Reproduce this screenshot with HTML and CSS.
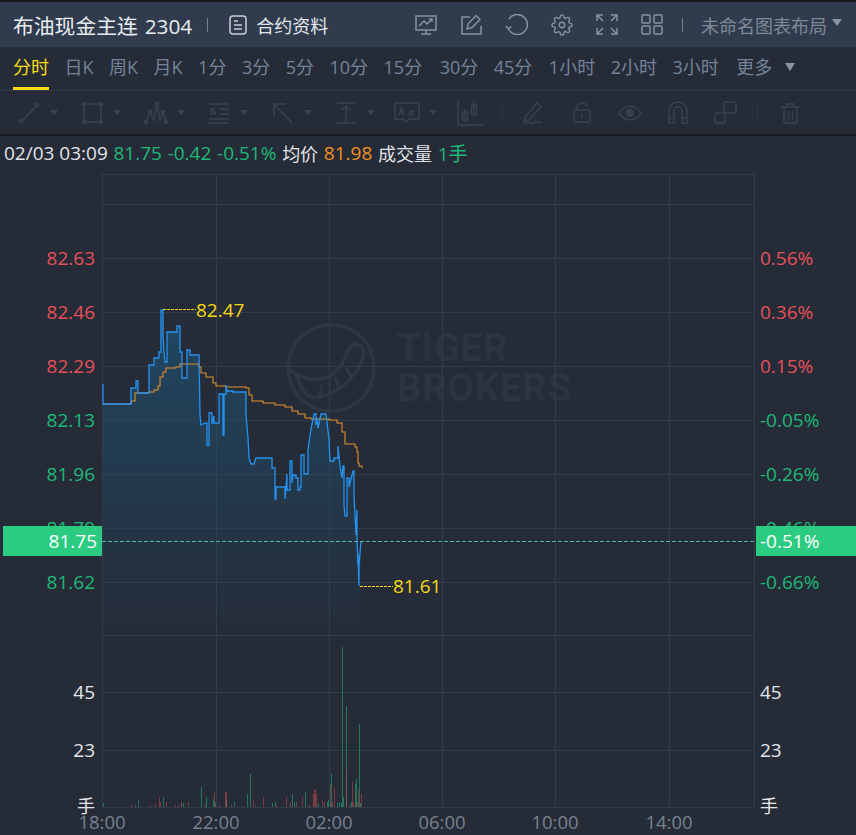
FILE: index.html
```html
<!DOCTYPE html>
<html lang="zh-CN">
<head>
  <meta charset="UTF-8">
  <title>布油现金主连 2304</title>
  <link rel="stylesheet" href="styles.css">
</head>
<body>
  <div class="header">
    <span class="title">布油现金主连 2304</span>
    <span class="divider title-divider"></span>
    <svg class="doc-icon" width="18" height="20" viewBox="0 0 18 20">
      <rect x="1" y="1" width="16" height="18" rx="3"/>
      <path d="M5 6h4M5 10h8M5 14h8"/>
    </svg>
    <span class="contract">合约资料</span>
    <div class="header-right">
      <svg width="22" height="20" viewBox="0 0 22 20">
        <rect x="1" y="1" width="20" height="14"/>
        <path d="M4 11l5-5 3 3 5-5M14 4h3v3M11 15v4M6 19h10"/>
      </svg>
      <svg width="22" height="21" viewBox="0 0 22 21">
        <path d="M10 3H2v17h19v-8M7 15l1-5 8-8.500 4 4-8 8z"/>
      </svg>
      <svg width="23" height="21" viewBox="0 0 23 21">
        <path d="M4 5a10 10 0 1 1-1 9M1 12l2.500 3 3-2.500"/>
      </svg>
      <svg width="22" height="22" viewBox="0 0 24 24">
        <circle cx="12" cy="12" r="3"/>
        <path d="M19.400 15a1.650 1.650 0 0 0 .33 1.820l.06.06a2 2 0 0 1 0 2.830 2 2 0 0 1-2.830 0l-.06-.06a1.650 1.650 0 0 0-1.820-.33 1.650 1.650 0 0 0-1 1.510V21a2 2 0 0 1-2 2 2 2 0 0 1-2-2v-.09A1.650 1.650 0 0 0 9 19.400a1.650 1.650 0 0 0-1.820.33l-.06.06a2 2 0 0 1-2.830 0 2 2 0 0 1 0-2.830l.06-.06a1.650 1.650 0 0 0 .33-1.820 1.650 1.650 0 0 0-1.510-1H3a2 2 0 0 1-2-2 2 2 0 0 1 2-2h.09A1.650 1.650 0 0 0 4.600 9a1.650 1.650 0 0 0-.33-1.820l-.06-.06a2 2 0 0 1 0-2.830 2 2 0 0 1 2.830 0l.06.06a1.650 1.650 0 0 0 1.820.33H9a1.650 1.650 0 0 0 1-1.510V3a2 2 0 0 1 2-2 2 2 0 0 1 2 2v.09a1.650 1.650 0 0 0 1 1.510 1.650 1.650 0 0 0 1.820-.33l.06-.06a2 2 0 0 1 2.830 0 2 2 0 0 1 0 2.830l-.06.06a1.650 1.650 0 0 0-.33 1.820V9a1.650 1.650 0 0 0 1.510 1H21a2 2 0 0 1 2 2 2 2 0 0 1-2 2h-.09a1.650 1.650 0 0 0-1.510 1z"/>
      </svg>
      <svg width="22" height="21" viewBox="0 0 22 21">
        <path d="M7 1H1v6M1 1l6 6M15 1h6v6M21 1l-6 6M1 14v6h6M1 20l6-6M21 14v6h-6M21 20l-6-6"/>
      </svg>
      <svg width="22" height="21" viewBox="0 0 22 21">
        <rect x="1" y="1" width="8" height="8" rx="1"/>
        <rect x="13" y="1" width="8" height="8" rx="1"/>
        <rect x="1" y="12" width="8" height="8" rx="1"/>
        <rect x="13" y="12" width="8" height="8" rx="1"/>
      </svg>
      <span class="divider layout-divider"></span>
      <span class="layout-name">未命名图表布局</span>
      <span class="caret caret-layout"></span>
    </div>
  </div>

  <div class="periods">
    <span class="period active">分时</span>
    <span class="period">日K</span>
    <span class="period">周K</span>
    <span class="period">月K</span>
    <span class="period">1分</span>
    <span class="period">3分</span>
    <span class="period">5分</span>
    <span class="period">10分</span>
    <span class="period">15分</span>
    <span class="period shift-2">30分</span>
    <span class="period">45分</span>
    <span class="period shift-1">1小时</span>
    <span class="period">2小时</span>
    <span class="period">3小时</span>
    <span class="period more">更多</span>
    <span class="caret caret-more"></span>
  </div>

  <div class="tools">
    <div class="tool">
      <svg width="24" height="24" viewBox="0 0 24 24"><path d="M5 20L19 5"/><circle cx="4" cy="20" r="1.500"/><circle cx="20" cy="4" r="1.500"/></svg>
      <span class="caret caret-tool"></span>
    </div>
    <div class="tool">
      <svg width="24" height="24" viewBox="0 0 24 24"><rect x="4" y="3" width="17" height="18"/><circle cx="4" cy="3" r="1.500"/><circle cx="21" cy="3" r="1.500"/><circle cx="4" cy="21" r="1.500"/><circle cx="21" cy="21" r="1.500"/></svg>
      <span class="caret caret-tool"></span>
    </div>
    <div class="tool">
      <svg width="24" height="24" viewBox="0 0 24 24"><path d="M2 21L6 11l4 8 3-16 3 16 3-8 3 10"/><circle cx="2" cy="21" r="1.500"/><circle cx="6" cy="11" r="1.500"/><circle cx="13" cy="3" r="1.500"/><circle cx="19" cy="11" r="1.500"/><circle cx="22" cy="21" r="1.500"/></svg>
      <span class="caret caret-tool"></span>
    </div>
    <div class="tool">
      <svg width="24" height="24" viewBox="0 0 24 24"><path d="M2 3h20M12 8h10M12 13h10M2 18h20M2 22h20"/><path d="M8 8H4v5h4v-2H6"/></svg>
      <span class="caret caret-tool"></span>
    </div>
    <div class="tool">
      <svg width="24" height="24" viewBox="0 0 24 24"><path d="M3 15V3h12M3 3l18 19"/></svg>
      <span class="caret caret-tool"></span>
    </div>
    <div class="tool tool-narrow">
      <svg width="24" height="24" viewBox="0 0 24 24"><path d="M3 2h19M3 22h19M12 6v16M8 9l4-4 4 4"/></svg>
      <span class="caret caret-tool"></span>
    </div>
    <div class="tool tool-text">
      <svg width="26" height="24" viewBox="0 0 26 24"><path d="M1 2h24v16H15l-3 3-3-3H1z"/><path d="M5 14l2.500-7L10 14M6 12h3M19 9v5M19 11a2 2 0 1 0 0 2"/></svg>
      <span class="caret caret-tool"></span>
    </div>
    <svg class="tool-candles" width="26" height="26" viewBox="0 0 26 26"><path d="M1 1v24h25M8 9v13M17 2v15"/><rect x="5.500" y="12" width="5" height="8"/><rect x="14.500" y="5" width="5" height="9"/></svg>
    <span class="tool-divider divider-a"></span>
    <svg class="tool-pen" width="22" height="24" viewBox="0 0 22 24"><path d="M3 16L15 2l4 4L7 19l-5 1zM1 23c5-4 8 1 11-1s5-1 8 0"/></svg>
    <svg class="tool-lock" width="18" height="21" viewBox="0 0 18 21"><rect x="1" y="8" width="16" height="12" rx="2"/><path d="M4 8V5a5 4 0 0 1 10 0M9 12v4"/></svg>
    <svg class="tool-eye" width="24" height="16" viewBox="0 0 24 16"><path d="M1 8c6-9 16-9 22 0-6 9-16 9-22 0z"/><circle class="solid" cx="12" cy="8" r="4"/></svg>
    <svg class="tool-magnet" width="20" height="23" viewBox="0 0 20 23"><path d="M1 22V10a9 9 0 0 1 18 0v12h-5V10a4 4 0 0 0-8 0v12zM1 17h5M14 17h5"/></svg>
    <svg class="tool-copy" width="23" height="23" viewBox="0 0 23 23"><rect x="1" y="12" width="10" height="10" rx="2"/><rect x="10" y="1" width="12" height="11" rx="2"/></svg>
    <span class="tool-divider divider-b"></span>
    <svg class="tool-trash" width="21" height="22" viewBox="0 0 21 22"><path d="M1 5h19M7 5V2h7v3M4 5v15a1 1 0 0 0 1 1h11a1 1 0 0 0 1-1V5M8.500 9v8M12.500 9v8"/></svg>
  </div>

  <div class="quote">
    <span class="num">02/03 03:09</span>
    <span class="num green">81.75</span>
    <span class="num green">-0.42</span>
    <span class="num green">-0.51%</span>
    <span>均价</span>
    <span class="num orange">81.98</span>
    <span>成交量</span>
    <span class="num green">1手</span>
  </div>

  <svg class="chart" width="856" height="665" viewBox="0 170 856 665">
    <defs>
      <linearGradient id="areaFill" x1="0" y1="310" x2="0" y2="636" gradientUnits="userSpaceOnUse">
        <stop offset="0" stop-color="#1f5170" stop-opacity="0.75"/>
        <stop offset="1" stop-color="#1f5170" stop-opacity="0.02"/>
      </linearGradient>
    </defs>

    <!-- watermark -->
    <g class="mark-logo">
      <circle cx="331" cy="368" r="43"/>
      <path d="M288 369c20 15 42 14 54-5l6-13c2-5 7-8 11-6 5 2 6 8 4 13-8 22-28 38-50 40-9-3-14-13-17-25M322 385l-3 14M335 377l5 13M346 368l6 10"/>
    </g>
    <text class="mark-text" x="397" y="348">TIGER</text>
    <text class="mark-text" x="397" y="388">BROKERS</text>

    <!-- grid -->
    <path class="grid" d="M102 174.500H754M102 204.500H754M102 258.500H754M102 312.500H754M102 366.500H754M102 420.500H754M102 474.500H754M102 528.500H754M102 582.500H754M102 635.500H754M102 692.500H754M102 750.500H754M102 807.500H754"/>
    <path class="grid" d="M102.500 174V808M216.500 174V808M329.500 174V808M442.500 174V808M555.500 174V808M669.500 174V808M754.500 174V808"/>

    <!-- price -->
    <path class="price-area" d="M103 384V404H131V388H136V381H138V393H149V365H154V358H159V352H161V310H163V333L164 352 165 362H167V332H177V326H180V352H182V378H187V350H190V355H199L200 415 201 425 205 423H207V445H209V413H212V424L214 416V423H219V394H223V435H224V394H226V385L227 391H233V392H246V415L248 438 249 458 251 464H254L256 458H272V468H275V499H276V487H285V499L287 474V490H290V461H292V483L293 475H296V478H298V490H300V487H301V455H304V474H308V449L311 429 314 414H316V425L317 418 318 428 321 414H326L329 439 330 461H334V458H338V446L340 466 342 478 343 466H344V505L345 516H347V478H349V487L353 471H354V495L356 535 357 510V540L358 566V554L359 586V565L361 541V636H103Z"/>

    <!-- average price -->
    <path class="avg-line" d="M103 404H131V401H135V393H149V392H154V390H158V386H160V377H163V372H166V368H176V367H180V364H199V367H201V373H206V377H213V383H216V386H226V387H246V388H249V395H252V401H263V403H275V405H285V407H292V411H298V414H305V418H311V419H329V420H337V423H342V432H345V444H355V447H357V452H358V463H359V466H362V468"/>

    <path class="price-line" d="M103 384V404H131V388H136V381H138V393H149V365H154V358H159V352H161V310H163V333L164 352 165 362H167V332H177V326H180V352H182V378H187V350H190V355H199L200 415 201 425 205 423H207V445H209V413H212V424L214 416V423H219V394H223V435H224V394H226V385L227 391H233V392H246V415L248 438 249 458 251 464H254L256 458H272V468H275V499H276V487H285V499L287 474V490H290V461H292V483L293 475H296V478H298V490H300V487H301V455H304V474H308V449L311 429 314 414H316V425L317 418 318 428 321 414H326L329 439 330 461H334V458H338V446L340 466 342 478 343 466H344V505L345 516H347V478H349V487L353 471H354V495L356 535 357 510V540L358 566V554L359 586V565L361 541"/>

    <!-- high and low -->
    <path class="extreme-dash" d="M163 309.500H196M360 586.500H393"/>
    <text class="extreme" x="196" y="310">82.47</text>
    <text class="extreme" x="393" y="586">81.61</text>

    <!-- volume -->
    <path class="vol-green" d="M103.500 807V803M138.500 807V800M163.500 807V797M181.500 807V803M183.500 807V803M201.500 807V787M206.500 807V797M213.500 807V799M215.500 807V802M226.500 807V799M234.500 807V802M247.500 807V794M250.500 807V774M272.500 807V803M275.500 807V802M292.500 807V794M294.500 807V802M305.500 807V792M318.500 807V803M327.500 807V802M328.500 807V800M331.500 807V774M337.500 807V803M339.500 807V802M341.500 807V803M342.500 807V647M346.500 807V706M343.500 807V797M351.500 807V802M355.500 807V784M356.500 807V779M359.500 807V724M360.500 807V803"/>
    <path class="vol-red" d="M131.500 807V805M135.500 807V805M150.500 807V805M155.500 807V804M159.500 807V797M160.500 807V802M166.500 807V802M175.500 807V805M178.500 807V805M181.500 807V802M188.500 807V802M205.500 807V805M214.500 807V792M219.500 807V805M225.500 807V792M226.500 807V792M231.500 807V805M253.500 807V799M255.500 807V805M263.500 807V797M276.500 807V805M286.500 807V797M290.500 807V802M296.500 807V802M302.500 807V797M309.500 807V805M313.500 807V794M314.500 807V790M315.500 807V789M316.500 807V794M322.500 807V799M324.500 807V802M330.500 807V784M332.500 807V802M334.500 807V787M346.500 807V769M349.500 807V805M352.500 807V782M353.500 807V802M357.500 807V802M358.500 807V789M361.500 807V794"/>

    <!-- left axis -->
    <g class="axis-left">
      <text class="up" x="95" y="258">82.63</text>
      <text class="up" x="95" y="312">82.46</text>
      <text class="up" x="95" y="366">82.29</text>
      <text class="down" x="95" y="420">82.13</text>
      <text class="down" x="95" y="474">81.96</text>
      <text class="down" x="95" y="528">81.79</text>
      <text class="down" x="95" y="582">81.62</text>
      <text class="plain" x="95" y="692">45</text>
      <text class="plain" x="95" y="750">23</text>
      <text class="plain hand" x="95" y="806">手</text>
    </g>

    <!-- right axis -->
    <g class="axis-right">
      <text class="up" x="760" y="258">0.56%</text>
      <text class="up" x="760" y="312">0.36%</text>
      <text class="up" x="760" y="366">0.15%</text>
      <text class="down" x="760" y="420">-0.05%</text>
      <text class="down" x="760" y="474">-0.26%</text>
      <text class="down" x="760" y="528">-0.46%</text>
      <text class="down" x="760" y="582">-0.66%</text>
      <text class="plain" x="760" y="692">45</text>
      <text class="plain" x="760" y="750">23</text>
      <text class="plain hand" x="760" y="806">手</text>
    </g>

    <!-- time axis -->
    <g class="axis-time">
      <text x="102" y="821">18:00</text>
      <text x="216" y="821">22:00</text>
      <text x="329" y="821">02:00</text>
      <text x="442" y="821">06:00</text>
      <text x="555" y="821">10:00</text>
      <text x="669" y="821">14:00</text>
    </g>

    <!-- last price -->
    <path class="last-dash" d="M102 541.500H756"/>
    <rect class="last-tag" x="3" y="526" width="99" height="30"/>
    <rect class="last-tag" x="756" y="526" width="100" height="30"/>
    <text class="last-text" x="97" y="541" text-anchor="end">81.75</text>
    <text class="last-text" x="760" y="541">-0.51%</text>
  </svg>
</body>
</html>
```

FILE: styles.css
```css
* {
  box-sizing: border-box;
}

body {
  margin: 0;
  width: 856px;
  height: 835px;
  overflow: hidden;
  background: #252b37;
  font-family: "Open Sans", "Noto Sans CJK SC", sans-serif;
}

svg {
  flex: none;
  display: block;
  fill: none;
}

.header {
  display: flex;
  align-items: center;
  height: 47px;
  padding-left: 13px;
  border-top: 2px solid #15181c;
  background: #303c4e;
}

.title {
  font-size: 20.800px;
  word-spacing: 1.500px;
  color: #e9ecef;
  white-space: nowrap;
}

.divider {
  width: 1px;
  height: 14px;
  background: #77818f;
}

.title-divider {
  margin-left: 15px;
}

.doc-icon {
  margin-left: 21px;
  stroke: #c9cdd3;
  stroke-width: 1.500;
}

.contract {
  margin-left: 9px;
  font-size: 18px;
  color: #e3e6ea;
}

.header-right {
  display: flex;
  align-items: center;
  margin-left: auto;
  gap: 23px;
  padding-right: 14px;
}

.header-right svg {
  stroke: #8792a1;
  stroke-width: 1.500;
}

.layout-divider {
  margin-left: -4px;
}

.layout-name {
  margin-left: -5px;
  font-size: 18px;
  color: #7e8896;
}

.caret {
  width: 0;
  height: 0;
  border-style: solid;
  border-color: #8a94a2 transparent transparent;
}

.caret-layout {
  margin: -4px 0 0 -18px;
  border-width: 7px 5px 0;
}

.periods {
  display: flex;
  height: 44px;
  padding-left: 13px;
  gap: 15.500px;
  border-bottom: 1px solid #2f3a47;
  background: #252c38;
}

.period {
  height: 43px;
  line-height: 41px;
  font-size: 18px;
  color: #75839a;
  white-space: nowrap;
}

.period.active {
  color: #f8dc12;
  border-bottom: 3px solid #f8dc12;
}

.period.shift-1 {
  margin-left: 1px;
}

.period.shift-2 {
  margin-left: 2px;
}

.period.more {
  margin-left: 2px;
}

.caret-more {
  align-self: center;
  margin: -4px 0 0 -3px;
  border-width: 8px 5px 0;
  border-top-color: #8a94a2;
}

.tools {
  display: flex;
  align-items: center;
  height: 43px;
  padding-left: 17px;
  background: #252c38;
}

.tools svg {
  stroke: #38424f;
  stroke-width: 1.500;
}

.tools .solid {
  fill: #38424f;
  stroke: none;
}

.tool {
  display: flex;
  align-items: center;
  flex: none;
  width: 63.400px;
}

.tool-narrow {
  width: 60px;
}

.tool-text {
  width: 63px;
}

.caret-tool {
  margin-left: 9px;
  border-width: 5px 4px 0;
  border-top-color: #38424f;
}

.tool-divider {
  width: 1px;
  height: 24px;
  background: #2b333f;
}

.divider-a {
  margin-left: 19px;
}

.tool-pen {
  margin-left: 19px;
}

.tool-lock {
  margin-left: 29px;
}

.tool-eye {
  margin-left: 27px;
}

.tool-magnet {
  margin-left: 26px;
}

.tool-copy {
  margin-left: 26px;
}

.divider-b {
  margin-left: 20px;
}

.tool-trash {
  margin-left: 22px;
}

.quote {
  display: flex;
  gap: 5.700px;
  align-items: center;
  height: 36px;
  padding-left: 4px;
  border-top: 2px solid #15181c;
  font-size: 18px;
  color: #e1e4e8;
  white-space: nowrap;
}

.num {
  font-size: 19px;
}

.green {
  color: #1fb878;
}

.orange {
  color: #f0901f;
}

.chart {
  font-size: 19px;
}

.chart text {
  dominant-baseline: central;
}

.grid {
  stroke: #303c49;
  stroke-width: 1;
}

.mark-logo {
  stroke: #2e3643;
  stroke-width: 3.500;
}

.mark-text {
  fill: #2c3440;
  font-family: Roboto, sans-serif;
  font-weight: 700;
  font-size: 38px;
  letter-spacing: 1px;
}

.avg-line {
  stroke: #e48f2a;
  stroke-width: 1.100;
}

.price-area {
  fill: url(#areaFill);
}

.price-line {
  stroke: #2592f0;
  stroke-width: 1.300;
}

.extreme-dash {
  stroke: #f5d90f;
  stroke-width: 1;
  stroke-dasharray: 3 1;
}

.extreme {
  fill: #f5d90f;
}

.vol-green {
  stroke: #1f9a68;
  stroke-width: 1;
  opacity: 0.7;
}

.vol-red {
  stroke: #c9474d;
  stroke-width: 1;
  opacity: 0.55;
}

.axis-left {
  text-anchor: end;
}

.up {
  fill: #e5505a;
}

.down {
  fill: #1fb878;
}

.plain {
  fill: #e4e6ea;
}

.hand {
  font-size: 18px;
}

.axis-time {
  fill: #77828f;
  font-size: 18.500px;
  text-anchor: middle;
}

.last-dash {
  stroke: #4db89a;
  stroke-width: 1;
  stroke-dasharray: 4 2;
}

.last-tag {
  fill: #2bcc82;
}

.last-text {
  fill: #fff;
}
```
